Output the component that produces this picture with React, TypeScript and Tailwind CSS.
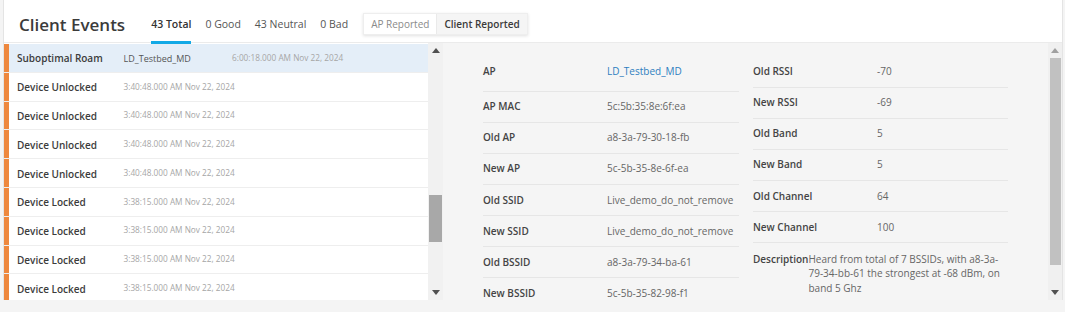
import React from "react";

const rows = [
  { title: "Suboptimal Roam", ap: "LD_Testbed_MD", time: "6:00:18.000 AM Nov 22, 2024", selected: true },
  { title: "Device Unlocked", time: "3:40:48.000 AM Nov 22, 2024" },
  { title: "Device Unlocked", time: "3:40:48.000 AM Nov 22, 2024" },
  { title: "Device Unlocked", time: "3:40:48.000 AM Nov 22, 2024" },
  { title: "Device Unlocked", time: "3:40:48.000 AM Nov 22, 2024" },
  { title: "Device Locked", time: "3:38:15.000 AM Nov 22, 2024" },
  { title: "Device Locked", time: "3:38:15.000 AM Nov 22, 2024" },
  { title: "Device Locked", time: "3:38:15.000 AM Nov 22, 2024" },
  { title: "Device Locked", time: "3:38:15.000 AM Nov 22, 2024" },
];

const leftDetails = [
  ["AP MAC", "5c:5b:35:8e:6f:ea"],
  ["Old AP", "a8-3a-79-30-18-fb"],
  ["New AP", "5c-5b-35-8e-6f-ea"],
  ["Old SSID", "Live_demo_do_not_remove"],
  ["New SSID", "Live_demo_do_not_remove"],
  ["Old BSSID", "a8-3a-79-34-ba-61"],
  ["New BSSID", "5c-5b-35-82-98-f1"],
];

const rightDetails = [
  ["Old RSSI", "-70"],
  ["New RSSI", "-69"],
  ["Old Band", "5"],
  ["New Band", "5"],
  ["Old Channel", "64"],
  ["New Channel", "100"],
];

function Up({ color }: { color: string }) {
  return (
    <svg width="8" height="5" viewBox="0 0 8 5">
      <polygon points="0,5 8,5 4,0" fill={color} />
    </svg>
  );
}
function Down({ color }: { color: string }) {
  return (
    <svg width="8" height="5" viewBox="0 0 8 5">
      <polygon points="0,0 8,0 4,5" fill={color} />
    </svg>
  );
}

export default function App() {
  return (
    <div className="w-[1065px] h-[312px] bg-[#f4f4f4] overflow-hidden font-['Open_Sans',sans-serif]">
      <div className="ml-[3px] w-[1060px] h-[300px] bg-white border-x border-[#e4e4e4] flex flex-col">
        {/* header */}
        <div className="h-[43px] shrink-0 border-b border-[#ebebeb] flex items-center pl-[15px]">
          <div className="text-[17px] font-semibold text-[#3b3b3b] leading-none mt-[7px]">Client Events</div>
          <div className="flex items-center ml-[26px] h-full gap-[14px] text-[10.5px] text-[#555]">
            <div className="relative h-full flex items-center font-semibold text-[#333] pt-[8px]">
              43 Total
              <div className="absolute left-0 right-0 bottom-[-2px] h-[3px] bg-[#12a9e6]" />
            </div>
            <div className="pt-[8px]">0 Good</div>
            <div className="pt-[8px]">43 Neutral</div>
            <div className="pt-[8px]">0 Bad</div>
          </div>
          <div className="ml-[15px] mt-[6px] flex h-[22px] border border-[#eeeeee] shadow-[0_1px_3px_rgba(0,0,0,0.12)] text-[10px]">
            <div className="px-[7px] flex items-center text-[#8a8a8a] bg-white">AP Reported</div>
            <div className="px-[7px] flex items-center font-semibold text-[#3a3a3a] bg-[#f5f5f5] border-l border-[#eaeaea]">Client Reported</div>
          </div>
        </div>

        {/* body */}
        <div className="flex flex-1 min-h-0">
          {/* list */}
          <div className="w-[424px] shrink-0 overflow-hidden pt-[1px]">
            {rows.map((r, i) => (
              <div
                key={i}
                className={`h-[28.8px] flex border-b border-[#eeeeee] ${r.selected ? "bg-[#e4eef8]" : "bg-white"}`}
              >
                <div className="w-[5px] shrink-0 bg-[#ee883e]" />
                <div className="w-[114.5px] shrink-0 pl-[8px] pt-[2px] flex items-center text-[10px] font-semibold text-[#3c3c3c]">
                  {r.title}
                </div>
                {r.ap && (
                  <div className="w-[108.5px] shrink-0 flex items-center pt-[1px] text-[9px] text-[#555]">{r.ap}</div>
                )}
                <div className="flex items-center text-[8.25px] text-[#a6a6a6]">{r.time}</div>
              </div>
            ))}
          </div>
          {/* list scrollbar */}
          <div className="w-[15px] shrink-0 bg-[#f1f1f1] flex flex-col">
            <div className="h-[14px] flex items-center justify-center">
              <Up color="#505050" />
            </div>
            <div className="flex-1 relative">
              <div className="absolute left-[1px] right-[1px] top-[138px] h-[47px] bg-[#a8a8a8]" />
            </div>
            <div className="h-[14px] flex items-center justify-center pb-[2px]">
              <Down color="#505050" />
            </div>
          </div>

          {/* detail panel */}
          <div className="flex-1 bg-[#f5f5f5] flex min-w-0">
            <div className="flex-1 pt-[13.6px] pl-[40px] flex gap-[14px] overflow-hidden text-[10px]">
              <div className="w-[256px] shrink-0">
                <div className="h-[35.1px] pb-[5px] flex items-center border-b border-[#e6e6e6]">
                  <div className="w-[124px] font-semibold text-[#444]">AP</div>
                  <div className="text-[#2e7fc0]">LD_Testbed_MD</div>
                </div>
                {leftDetails.map(([k, v]) => (
                  <div key={k} className="h-[31.1px] flex items-center border-b border-[#e6e6e6]">
                    <div className="w-[124px] font-semibold text-[#444]">{k}</div>
                    <div className="text-[#666]">{v}</div>
                  </div>
                ))}
              </div>
              <div className="w-[255px] shrink-0">
                {rightDetails.map(([k, v]) => (
                  <div key={k} className="h-[31.1px] flex items-center border-b border-[#e6e6e6]">
                    <div className="w-[124px] font-semibold text-[#444]">{k}</div>
                    <div className="text-[#666]">{v}</div>
                  </div>
                ))}
                <div className="flex pt-[8.8px] leading-[14.5px]">
                  <div className="font-semibold text-[#444] shrink-0">Description</div>
                  <div className="w-[199px] text-[#666]">
                    Heard from total of 7 BSSIDs, with a8-3a-79-34-bb-61 the strongest at -68 dBm, on band 5 Ghz
                  </div>
                </div>
              </div>
            </div>
            {/* panel scrollbar */}
            <div className="w-[14px] shrink-0 bg-[#f0f0f0] flex flex-col">
              <div className="h-[14px] flex items-center justify-center">
                <Up color="#a0a0a0" />
              </div>
              <div className="flex-1 relative">
                <div className="absolute left-[2px] right-[1px] top-[1px] h-[207px] bg-[#c1c1c1]" />
              </div>
              <div className="h-[14px] flex items-center justify-center pb-[2px]">
                <Down color="#505050" />
              </div>
            </div>
          </div>
        </div>
      </div>
    </div>
  );
}
